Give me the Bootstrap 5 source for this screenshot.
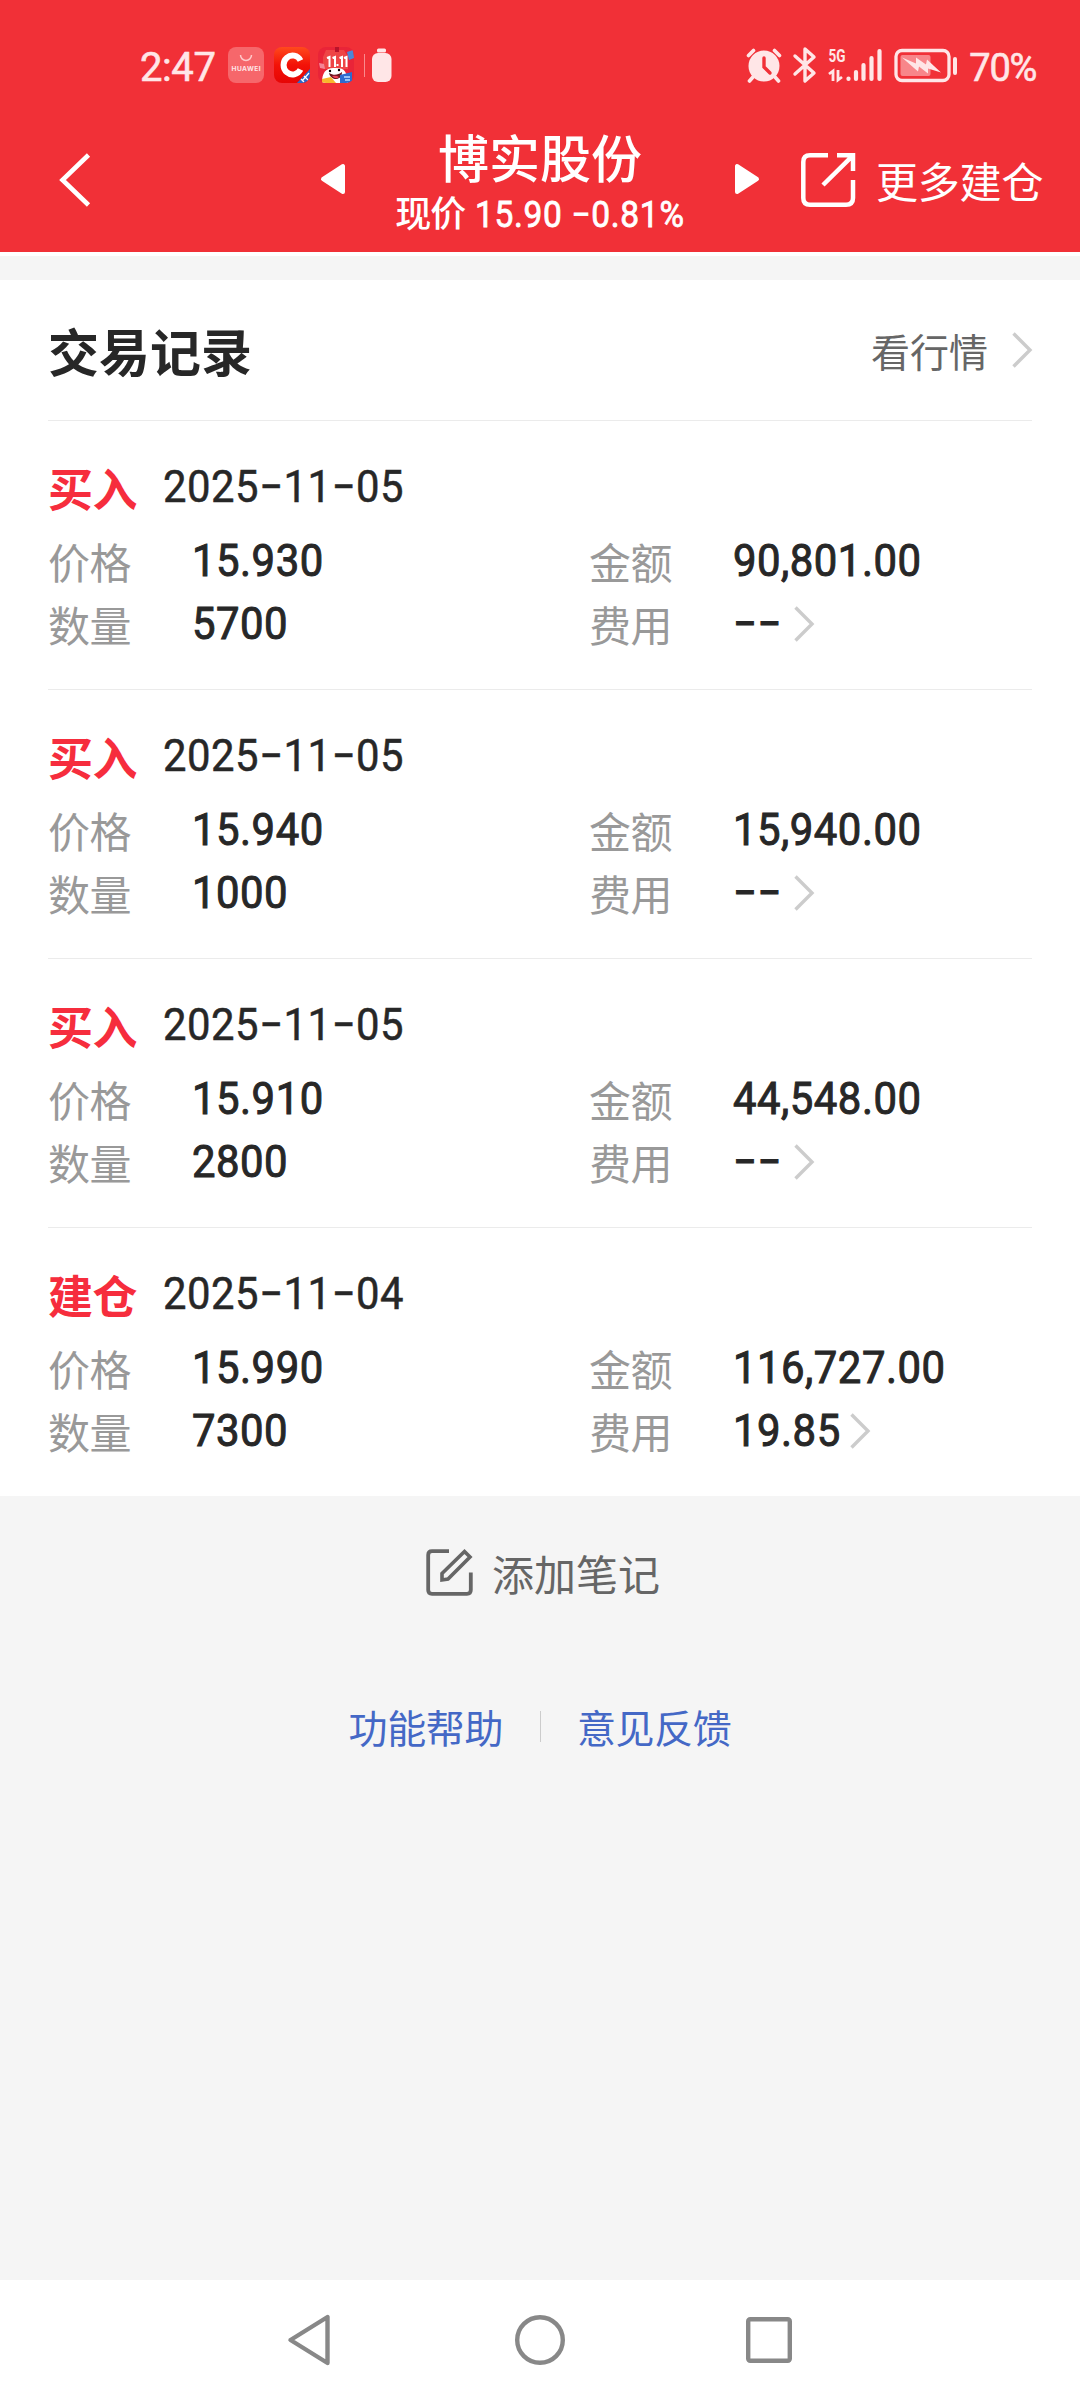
<!DOCTYPE html>
<html lang="zh-CN">
<head>
<meta charset="utf-8">
<meta name="viewport" content="width=device-width, initial-scale=1">
<title>交易记录</title>
<link href="https://cdn.jsdelivr.net/npm/bootstrap@5.3.0/dist/css/bootstrap.min.css" rel="stylesheet">
<style>
body{font-family:Roboto,"Noto Sans CJK SC",sans-serif;background:#f5f5f5;color:#272727;min-height:2400px}
svg{display:block;flex:none;overflow:visible}
.cjk{font-family:"Noto Sans CJK SC",sans-serif}
.top-area{background:#f13037;height:252px;color:#fff}
.status-bar{height:86px;padding:0 44px 0 140px;color:#ffe6e7}
.status-bar .clock{font-size:40px;line-height:50px;letter-spacing:-.4px;width:88px;margin-top:43px;-webkit-text-stroke:.6px}
.status-bar .charge{font-size:38px;line-height:50px;letter-spacing:-1.3px;margin:43px 0 0 9px;-webkit-text-stroke:.6px}
.status-bar svg{margin-top:46px}
.title-bar{height:166px;padding-left:60px;padding-right:35px}
.back-col{width:261px;padding-top:67px}
.title-col{width:390px;text-align:center}
.stock-name{font-size:51px;font-weight:500;line-height:60px;margin-top:40px}
.stock-quote{font-size:36px;font-weight:500;line-height:50px;white-space:pre}
.stock-quote .cjk{letter-spacing:-1px}
.quote-num{display:inline-block;font-weight:400;-webkit-text-stroke:.8px;letter-spacing:.75px;transform:scaleX(.93);margin:0 -8px 0 -5px}
.more-link{font-size:42px;line-height:54px;padding-top:67px;margin-left:42px;letter-spacing:-.2px}
.more-link svg{margin-right:20px}
.edge{height:4px;background:#fff}
.sheet{margin-top:24px;padding:0 48px;height:1216px}
.sheet-head{height:140px}
.sheet-title{font-size:51px;font-weight:700}
.quote-link{font-size:39px;line-height:56px;color:#666}
.record{border-top:1px solid #ebebeb;height:269px;padding-top:36px}
.rec-type{font-size:45px;font-weight:700;line-height:60px;color:#f62d3d;width:115px;padding-top:1px;letter-spacing:-.4px}
.rec-date,.field-value{display:inline-block;font-size:45px;letter-spacing:.55px;transform:scaleX(.93);transform-origin:left center}
.rec-date{line-height:60px;-webkit-text-stroke:.5px}
.fields{margin-top:11px}
.field{height:63px;line-height:63px}
.field-left{width:541px}
.field-name{font-size:42px;color:#999;width:144px;letter-spacing:-.6px}
.field-value{-webkit-text-stroke:1px;margin-right:1px}
.field-value.is-empty{margin-right:8px}
.note-btn{margin:49px 0 0 6px;height:54px;font-size:42px;color:#666}
.note-btn svg{margin:1px 19px 0 0}
.help-links{margin-top:100px;height:54px;font-size:39px;color:#4468c6;letter-spacing:-.4px}
.rule{width:1px;height:31px;background:#ccc;margin:0 36px 0 37px}
.sys-nav{height:120px;margin-top:auto;padding-right:2px}
</style>
</head>
<body class="d-flex flex-column">
<header class="top-area">
  <div class="status-bar d-flex align-items-start">
    <div class="clock">2:47</div>
    <svg width="36" height="38" viewBox="0 0 36 38"><rect y="1" width="36" height="36" rx="8" fill="#f6676b"/><path d="M12.500 9a5.500 5.500 0 0 0 11 0" fill="none" stroke="#ffc9ca" stroke-width="1.500"/><text x="18" y="24.500" font-family="Inter" font-size="6.600" font-weight="700" fill="#ffe6e7" text-anchor="middle" textLength="29">HUAWEI</text></svg>
    <svg class="me-2" style="margin-left:10px" width="36" height="38" viewBox="0 0 36 38"><defs><linearGradient id="cg" x2="0" y2="1"><stop stop-color="#ff4a1c"/><stop offset=".5" stop-color="#f31208"/><stop offset="1" stop-color="#e60505"/></linearGradient><clipPath id="cc"><rect y="1" width="36" height="36" rx="8"/></clipPath></defs><g clip-path="url(#cc)"><rect y="1" width="36" height="36" fill="url(#cg)"/><path d="M26.500 14.500A9 9.500 0 1 0 26.500 23.500" fill="none" stroke="#fff" stroke-width="6"/><path d="M22 38L37 22V38z" fill="#2f67c8"/><path d="M28 35l7-8M27 33l3 3M30 30l4 4" stroke="#fff" stroke-width="1.200"/></g></svg>
    <svg width="36" height="38" viewBox="0 0 36 38"><defs><clipPath id="jc"><rect y="1" width="36" height="36" rx="8"/></clipPath></defs><g clip-path="url(#jc)"><rect y="1" width="36" height="36" fill="#e92438"/><path d="M8 4h18l4 7v12H5V11z" fill="#ee4546"/><path d="M17 1v5h4V1" fill="#b9132a"/><path d="M29 6l6-2 1 8-5 2z" fill="#4c87d8"/><path d="M1 17l5 1 1 5-5-1z" fill="#f48596"/><path d="M9 12l2.500-1v10M14.500 12l2.500-1v10M21.500 12l2.500-1v10M26 12l2.500-1v10" fill="none" stroke="#fff" stroke-width="2"/><path d="M18.500 19h2" stroke="#fff" stroke-width="2"/><path d="M4 37c0-11 4-16 14-15 9 0 11 4 12 15z" fill="#fff"/><path d="M11 27c5 3 9 2 13-1 0 5-3 7-6 7s-6-2-7-6z" fill="#6c1720"/><path d="M14 30q4-1 7 1-3 3-7-1" fill="#f14257"/><circle cx="12" cy="25" r="1.200"/><circle cx="21" cy="24" r="1.200"/><path d="M4 33l9-2 5 6H4z" fill="#f9b72c"/><path d="M22 29l12-3v11H22z" fill="#2c6bd0"/><path d="M26 31h6m-5 3h5" stroke="#bcdcff" stroke-width="1.500"/></g></svg>
    <svg style="margin-left:10px" width="30" height="38" viewBox="0 0 30 38"><path d="M.5 8v23" stroke="#f98a8d"/><rect x="13" y="2.500" width="9" height="4" rx="1.500" fill="#ffe6e7"/><rect x="8" y="7" width="19.500" height="29" rx="6" fill="#ffe6e7"/></svg>
    <div class="d-flex ms-auto">
      <svg width="36" height="38" viewBox="0 0 36 38"><circle cx="18" cy="20" r="15.500" fill="#ffe6e7"/><path d="M2.500 9.500L7.500 4.500M28.500 4.500L33.500 9.500M7 31l-3.500 4M29 31l3.500 4" stroke="#ffe6e7" stroke-width="3.600" stroke-linecap="round"/><path d="M18 12v9l6 6" fill="none" stroke="#f13037" stroke-width="3.400" stroke-linecap="round"/></svg>
      <svg style="margin-left:11px" width="24" height="38" viewBox="0 0 24 38"><path d="M2 10l19 17-9 8V3l9 8L2 28" fill="none" stroke="#ffe6e7" stroke-width="3.400" stroke-linecap="round" stroke-linejoin="round"/></svg>
      <svg style="margin-left:11px" width="54" height="38" viewBox="0 0 54 38"><text x=".5" y="16" font-family="Roboto" font-size="19" font-weight="700" fill="#ffe6e7" textLength="17" lengthAdjust="spacingAndGlyphs">5G</text><path d="M1 28l4-3v10M10 24v10l4-3" fill="none" stroke="#ffe6e7" stroke-width="2.800"/><g stroke="#ffe6e7" stroke-width="4.200" stroke-linecap="round"><path d="M20.500 32.500v.5M28 26v7M35.500 19v14M43.500 12v21M51.500 5v28"/></g></svg>
      <svg style="margin-left:12px" width="66" height="38" viewBox="0 0 66 38"><rect x="2" y="4.500" width="53" height="30" rx="6" fill="none" stroke="#ffe6e7" stroke-width="3.300"/><rect x="6.500" y="9" width="30" height="21" rx="2" fill="#f8868a"/><path d="M8 11.500l14 6v-6l10 7 1-5 14 13-13-4v5l-9-7-1 5z" fill="#ffe6e7"/><path d="M61 13v14" stroke="#ffe6e7" stroke-width="4" stroke-linecap="round"/></svg>
      <div class="charge">70%</div>
    </div>
  </div>
  <div class="title-bar d-flex align-items-start">
    <div class="back-col"><svg width="31" height="54" viewBox="0 0 31 54"><path d="M28.500 2L2.500 27 28.500 52" fill="none" stroke="#fff" stroke-width="4.600"/></svg></div>
    <svg style="margin-top:78px" width="24" height="30" viewBox="0 0 24 30"><path d="M2 15L22 2V28z" fill="#fff" stroke="#fff" stroke-width="4" stroke-linejoin="round"/></svg>
    <div class="title-col">
      <div class="stock-name cjk">博实股份</div>
      <div class="stock-quote"><span class="cjk">现价 </span><span class="quote-num">15.90 −0.81%</span></div>
    </div>
    <svg style="margin-top:78px" width="24" height="30" viewBox="0 0 24 30"><path d="M22 15L2 2V28z" fill="#fff" stroke="#fff" stroke-width="4" stroke-linejoin="round"/></svg>
    <div class="more-link cjk d-flex align-items-center text-nowrap"><svg width="55" height="54" viewBox="0 0 55 54"><path d="M27 2.300H9Q2.300 2.300 2.300 9V45Q2.300 51.700 9 51.700H45Q52 51.700 52 45V27M36 2.300H52V18M52 2.300L22 32" fill="none" stroke="#fff" stroke-width="4.500"/></svg>更多建仓</div>
  </div>
</header>
<div class="edge"></div>
<main class="sheet bg-white">
  <div class="sheet-head d-flex align-items-center justify-content-between">
    <div class="sheet-title cjk">交易记录</div>
    <div class="quote-link cjk d-flex align-items-center">看行情<svg class="ms-4" width="20" height="36" viewBox="0 0 20 36"><path d="M1.500 1.500L18 18 1.500 34.500" fill="none" stroke="#ccc" stroke-width="3.400"/></svg></div>
  </div>
  <div id="records"></div>
</main>
<div class="note-btn cjk d-flex align-items-center justify-content-center"><svg width="47" height="47" viewBox="0 0 47 47"><path d="M23 2.200H6Q2.200 2.200 2.200 6V41Q2.200 44.800 6 44.800H41Q44.800 44.800 44.800 41V23.500" fill="none" stroke="#666" stroke-width="3.800"/><path d="M16 31V24.500L38.500 2.500 44 8 22 30z" fill="none" stroke="#666" stroke-width="3.600"/></svg>添加笔记</div>
<div class="help-links cjk d-flex align-items-center justify-content-center"><span>功能帮助</span><span class="rule"></span><span>意见反馈</span></div>
<nav class="sys-nav bg-white d-flex align-items-center justify-content-center">
  <svg width="44" height="52" viewBox="0 0 44 52"><path d="M3.500 26L40.500 3V49z" fill="none" stroke="#888" stroke-width="4.400" stroke-linejoin="round"/></svg>
  <svg style="margin:0 181px 0 184px" width="50" height="50" viewBox="0 0 50 50"><circle cx="25" cy="25" r="22.800" fill="none" stroke="#888" stroke-width="4.400"/></svg>
  <svg width="46" height="46" viewBox="0 0 46 46"><rect x="2.200" y="2.200" width="41.600" height="41.600" rx="2" fill="none" stroke="#888" stroke-width="4.400"/></svg>
</nav>
<script src="https://cdn.jsdelivr.net/npm/bootstrap@5.3.0/dist/js/bootstrap.bundle.min.js"></script>
<script>
const rows = [
  ['买入','2025−11−05','15.930','90,801.00','5700','−−'],
  ['买入','2025−11−05','15.940','15,940.00','1000','−−'],
  ['买入','2025−11−05','15.910','44,548.00','2800','−−'],
  ['建仓','2025−11−04','15.990','116,727.00','7300','19.85']
];
const arrow = '<svg width="20" height="36" viewBox="0 0 20 36"><path d="M1.500 1.500L18 18 1.500 34.500" fill="none" stroke="#ccc" stroke-width="3.400"/></svg>';
const field = (n, v, cls, extra) => `<div class="field d-flex align-items-center ${cls}"><span class="field-name cjk">${n}</span><span class="field-value ${v === '−−' ? 'is-empty' : ''}">${v}</span>${extra || ''}</div>`;
document.getElementById('records').innerHTML = rows.map(r => `
<section class="record">
  <div class="d-flex"><span class="rec-type cjk">${r[0]}</span><span class="rec-date">${r[1]}</span></div>
  <div class="fields">
    <div class="d-flex">${field('价格', r[2], 'field-left')}${field('金额', r[3], '')}</div>
    <div class="d-flex">${field('数量', r[4], 'field-left')}${field('费用', r[5], '', arrow)}</div>
  </div>
</section>`).join('');
</script>
</body>
</html>
